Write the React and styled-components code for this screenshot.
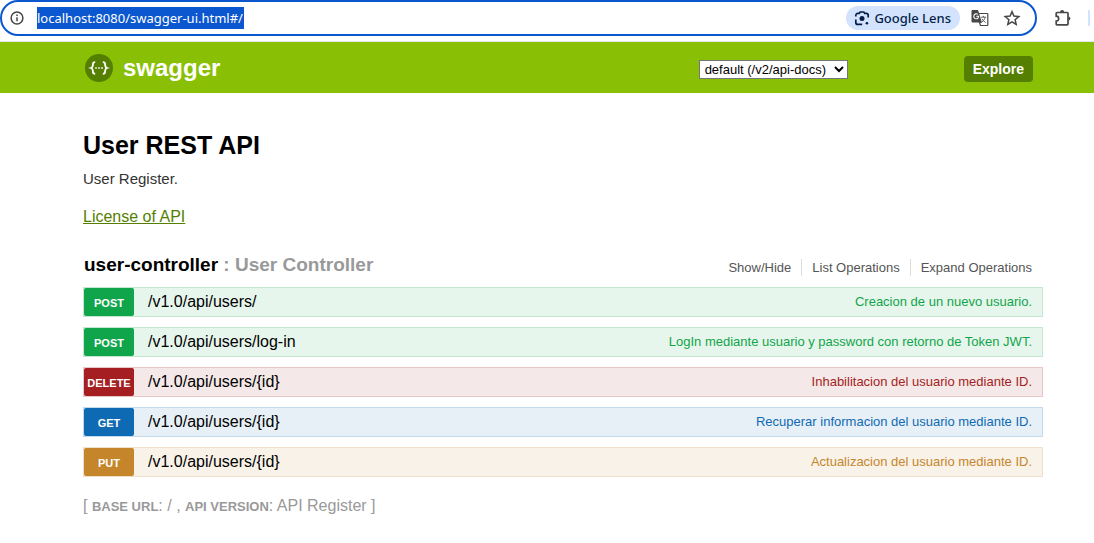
import React from "react";
import styled, { createGlobalStyle } from "styled-components";

const GlobalStyle = createGlobalStyle`
  *, *::before, *::after { box-sizing: border-box; }
  body {
    margin: 0;
    background: #fff;
    color: #000;
    font-family: "Liberation Sans", Arial, sans-serif;
  }
  h1, h2, p, ul { margin: 0; padding: 0; }
  ul { list-style: none; }
  button { font: inherit; border: 0; padding: 0; background: none; cursor: pointer; }
`;

const BrowserBar = styled.div`
  display: flex;
  align-items: center;
  height: 42px;
  padding-bottom: 5px;
  border-bottom: 1px solid #e3e5e8;
`;

const AddressBox = styled.div`
  flex: 1;
  display: flex;
  align-items: center;
  height: 36px;
  padding: 0 14px 0 7px;
  border: 2px solid #0b57d0;
  border-radius: 18px;
  font-family: "Noto Sans", "Open Sans", sans-serif;
`;

const AddressInput = styled.input`
  field-sizing: content;
  height: 22px;
  margin: 0 auto 0 12px;
  padding: 0 1px 0 0;
  border: 0;
  outline: 0;
  background: #0b57d0;
  color: #fff;
  font-family: inherit;
  font-size: 13px;
`;

const LensButton = styled.button`
  display: flex;
  align-items: center;
  gap: 4px;
  height: 24px;
  padding: 0 9px 0 8px;
  border-radius: 12px;
  background: #d3e3fd;
  color: #041e49;
  font-size: 13px;
  font-weight: 500;
`;

const IconButton = styled.button`
  display: flex;
  margin-left: ${(p) => p.$gap}px;
  color: #474747;
`;

const BarDivider = styled.span`
  width: 2px;
  height: 16px;
  margin: 0 4px 0 16px;
  background: #d3e3fd;
`;

const Header = styled.header`
  background: #89bf04;
  padding: 0 61px 0 84px;
`;

const HeaderRow = styled.div`
  display: flex;
  align-items: center;
  height: 51px;
`;

const Logo = styled.a`
  display: flex;
  align-items: center;
  gap: 9px;
  margin-right: auto;
  color: #fff;
  font-size: 24px;
  font-weight: 700;
  text-decoration: none;
`;

const ApiSelect = styled.select`
  width: 149px;
  height: 19px;
  margin-top: 4px;
  padding: 0 0 0 1px;
  border: 1px solid #767676;
  background: #fff;
  color: #000;
  font-family: inherit;
  font-size: 13px;
`;

const ExploreButton = styled.button`
  height: 26px;
  margin: 3px 0 0 116px;
  padding: 0 9px;
  border-radius: 4px;
  background: #547f00;
  color: #fff;
  font-size: 14px;
  font-weight: 700;
`;

const Page = styled.main`
  padding: 36px 51px 24px 83px;
`;

const Title = styled.h1`
  font-size: 25px;
  line-height: 32px;
`;

const Description = styled.p`
  margin-top: 8px;
  color: #333;
  font-size: 15px;
  line-height: 20px;
`;

const LicenseLink = styled.a`
  display: inline-block;
  margin-top: 18px;
  color: #547f00;
  font-size: 16px;
  line-height: 20px;
`;

const ResourceHeading = styled.div`
  display: flex;
  align-items: center;
  justify-content: space-between;
  margin: 26px 0 10px;
  padding-left: 1px;
`;

const ResourceName = styled.h2`
  color: #999;
  font-size: 19px;
  line-height: 24px;
  strong { color: #000; }
`;

const Options = styled.ul`
  display: flex;
  padding: 5px 1px 0 0;
`;

const Option = styled.li`
  display: flex;
  padding: 0 10px;
  border-right: 1px solid #ddd;
  &:last-child { border-right: 0; }
`;

const OptionButton = styled.button`
  color: #555;
  font-size: 13px;
  line-height: 17px;
`;

const themes = {
  POST: { solid: "#10a54a", tint: "#e7f6ec", line: "#c3e8d1" },
  DELETE: { solid: "#a41e22", tint: "#f5e8e8", line: "#e8c6c7" },
  GET: { solid: "#0f6ab4", tint: "#e7f0f7", line: "#c3d9ec" },
  PUT: { solid: "#c5862b", tint: "#f9f2e9", line: "#f0e0ca" },
};

const Operations = styled.ul`
  display: grid;
  gap: 10px;
`;

const Operation = styled.li`
  display: flex;
  align-items: center;
  height: 30px;
  padding-right: 10px;
  border: 1px solid ${(p) => p.$tone.line};
  background: ${(p) => p.$tone.tint};
  color: ${(p) => p.$tone.solid};
`;

const Method = styled.button`
  width: 50px;
  height: 28px;
  padding-top: 2px;
  border-radius: 2px;
  background: ${(p) => p.$tone.solid};
  color: #fff;
  font-size: 11px;
  font-weight: 700;
`;

const Path = styled.a`
  margin: 0 auto 0 14px;
  color: #000;
  font-size: 16px;
  line-height: 20px;
  text-decoration: none;
`;

const Summary = styled.a`
  color: inherit;
  font-size: 13px;
  line-height: 20px;
  text-decoration: none;
`;

const Footer = styled.footer`
  margin-top: 19px;
  color: #999;
  font-size: 16px;
  line-height: 20px;
`;

const Label = styled.span`
  font-size: 13px;
  font-weight: 700;
`;

const operations = [
  ["POST", "/v1.0/api/users/", "Creacion de un nuevo usuario."],
  ["POST", "/v1.0/api/users/log-in", "LogIn mediante usuario y password con retorno de Token JWT."],
  ["DELETE", "/v1.0/api/users/{id}", "Inhabilitacion del usuario mediante ID."],
  ["GET", "/v1.0/api/users/{id}", "Recuperar informacion del usuario mediante ID."],
  ["PUT", "/v1.0/api/users/{id}", "Actualizacion del usuario mediante ID."],
];

const InfoIcon = () => (
  <svg width="16" height="16" viewBox="0 0 16 16" fill="none" stroke="currentColor" strokeWidth="1.5">
    <circle cx="8" cy="8" r="5.9" />
    <path d="M8 7.2v4M8 4.6v1.5" />
  </svg>
);

const LensIcon = () => (
  <svg width="16" height="16" viewBox="0 0 16 16" fill="none" stroke="currentColor" strokeWidth="1.7">
    <path d="M1.8 6.6V5.4a2 2 0 0 1 2-2h1.4L6.200 2h3.600l1 1.400h1.400a2 2 0 0 1 2 2v2.200M1.800 9.400v3a2 2 0 0 0 2 2h4.400" />
    <circle cx="8" cy="8.500" r="2.500" fill="currentColor" stroke="none" />
    <circle cx="12.900" cy="13.200" r="1.300" fill="currentColor" stroke="none" />
  </svg>
);

const TranslateIcon = () => (
  <svg width="18" height="18" viewBox="0 0 18 18" fill="none">
    <path d="M1.500 1H7l1 3 2.800 9.500H1.500a1 1 0 0 1-1-1V2a1 1 0 0 1 1-1z" fill="#474747" />
    <path d="M8 4.500h8a.8.8 0 0 1 .8.800v10.400a.8.8 0 0 1-.8.800H9.500L8.500 13.500l2.300-.5" stroke="#474747" strokeWidth="1.200" />
    <path d="M5.200 7.300h2.300c.1 1.500-.9 2.500-2.300 2.500A2.500 2.500 0 1 1 6.900 5.400" stroke="#fff" strokeWidth="1.100" />
    <path d="M9.800 8.200h5.400M12.400 6.900v1.300M14.200 8.300c-.5 2-1.700 3.500-3.200 4.700M10.900 9.800c.8 1.500 2.100 2.700 3.600 3.700" stroke="#5f5f5f" />
  </svg>
);

const StarIcon = () => (
  <svg width="18" height="18" viewBox="0 0 18 18" fill="none" stroke="currentColor" strokeWidth="1.500">
    <path d="M9 2.600l1.900 4.500 4.900.4-3.700 3.200 1.100 4.800L9 12.900l-4.200 2.600 1.100-4.800-3.700-3.200 4.900-.4z" />
  </svg>
);

const PuzzleIcon = () => (
  <svg width="18" height="18" viewBox="0 0 18 18">
    <path
      d="M3 3.500h10.200a.8.8 0 0 1 .8.800V15a.8.8 0 0 1-.8.800H3a.8.800 0 0 1-.8-.8v-2.800a2.500 2.500 0 0 0 0-5V4.300a.8.800 0 0 1 .8-.8z"
      fill="none"
      stroke="currentColor"
      strokeWidth="1.700"
    />
    <path d="M6 3.200a2.100 2.100 0 0 1 4.200 0zM14.300 7.500a2.100 2.100 0 0 1 0 4.200z" fill="currentColor" />
  </svg>
);

const SwaggerMark = () => (
  <svg width="30" height="30" viewBox="0 0 30 30" fill="none">
    <circle cx="15" cy="15" r="14" fill="#547f00" />
    <path d="M11.200 9.200c-1.900 0-2.300.6-2.300 2.300 0 2.200-.3 3-1.900 3.500 1.600.5 1.900 1.300 1.900 3.500 0 1.700.4 2.300 2.300 2.300M18.800 9.200c1.900 0 2.300.6 2.300 2.300 0 2.200.3 3 1.900 3.500-1.600.5-1.900 1.300-1.900 3.500 0 1.700-.4 2.300-2.300 2.300" stroke="#fff" strokeWidth="1.800" />
    <path d="M11.200 14.200h1.600v1.600h-1.600zM14.200 14.200h1.600v1.600h-1.600zM17.200 14.200h1.600v1.600h-1.600z" fill="#fff" />
  </svg>
);

export default function App() {
  return (
    <>
      <GlobalStyle />
      <BrowserBar>
        <AddressBox>
          <IconButton $gap={0} aria-label="Site information"><InfoIcon /></IconButton>
          <AddressInput aria-label="Address" defaultValue="localhost:8080/swagger-ui.html#/" />
          <LensButton><LensIcon />Google Lens</LensButton>
          <IconButton $gap={11} aria-label="Translate"><TranslateIcon /></IconButton>
          <IconButton $gap={14} aria-label="Bookmark"><StarIcon /></IconButton>
        </AddressBox>
        <IconButton $gap={17} aria-label="Extensions"><PuzzleIcon /></IconButton>
        <BarDivider />
      </BrowserBar>
      <Header>
        <HeaderRow>
          <Logo href="#"><SwaggerMark />swagger</Logo>
          <ApiSelect aria-label="API definition">
            <option>default (/v2/api-docs)</option>
          </ApiSelect>
          <ExploreButton>Explore</ExploreButton>
        </HeaderRow>
      </Header>
      <Page>
        <Title>User REST API</Title>
        <Description>User Register.</Description>
        <LicenseLink href="#license">License of API</LicenseLink>
        <ResourceHeading>
          <ResourceName><strong>user-controller</strong> : User Controller</ResourceName>
          <Options>
            {["Show/Hide", "List Operations", "Expand Operations"].map((label) => (
              <Option key={label}><OptionButton>{label}</OptionButton></Option>
            ))}
          </Options>
        </ResourceHeading>
        <Operations>
          {operations.map(([method, path, summary]) => (
            <Operation key={method + path} $tone={themes[method]}>
              <Method $tone={themes[method]}>{method}</Method>
              <Path href="#operation">{path}</Path>
              <Summary href="#operation">{summary}</Summary>
            </Operation>
          ))}
        </Operations>
        <Footer>
          [ <Label>BASE URL</Label>: / , <Label>API VERSION</Label>: API Register ]
        </Footer>
      </Page>
    </>
  );
}
